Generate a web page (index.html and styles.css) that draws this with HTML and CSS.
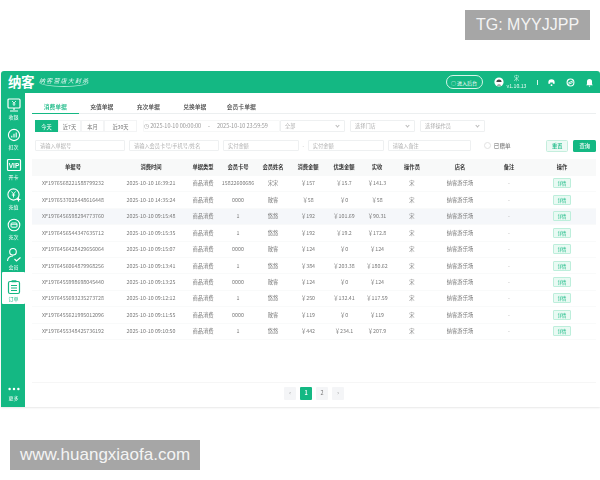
FILE: index.html
```html
<!DOCTYPE html>
<html lang="zh">
<head>
<meta charset="utf-8">
<title>消费单据</title>
<link rel="stylesheet" href="styles.css">
</head>
<body>
<div class="wm wm-top">TG: MYYJJPP</div>
<div class="app">
  <header class="topbar">
    <div class="brand"><span class="logo">纳客</span><span class="slogan">纳客营店大封杀</span></div>
    <div class="top-right">
      <button class="admin">○ 进入后台</button>
      <svg class="avatar" viewBox="0 0 10 10"><circle cx="5" cy="5" r="4.6" fill="#fff"/><path d="M2.4 5a2.6 2.6 0 0 1 5.2 0z" fill="#444"/><path d="M2.6 8.6a3 3 0 0 1 4.8 0z" fill="#555"/></svg>
      <div class="user"><span>宋</span><span>v1.10.13</span></div>
      <span class="sep"></span>
      <svg class="ticon" viewBox="0 0 10 10"><path d="M1.5 5a3.5 3.5 0 1 1 7 0v1.5h-2V5h-3v1.5h-2z" fill="#fff"/><circle cx="5" cy="8" r="1" fill="#fff"/></svg>
      <svg class="ticon" viewBox="0 0 10 10"><circle cx="5" cy="5" r="3.8" fill="none" stroke="#fff" stroke-width="1.2"/><path d="M2.5 5.5 8 3M2.5 7 7.5 5" stroke="#fff" stroke-width="1"/></svg>
      <svg class="ticon" viewBox="0 0 10 10"><path d="M5 1a2.8 2.8 0 0 1 2.8 2.8V7l1 1H1.200l1-1V3.800A2.800 2.800 0 0 1 5 1z" fill="#fff"/><circle cx="5" cy="9" r=".8" fill="#fff"/></svg>
    </div>
  </header>
  <div class="body">
    <nav class="side">
      <a class="nav"><svg viewBox="0 0 16 16"><rect x="2" y="2" width="12" height="9" rx="1" fill="none" stroke="#fff" stroke-width="1.200"/><path d="M8 11v2M4 14h8" stroke="#fff" stroke-width="1.200"/><path d="M6 4 8 6l2-2M8 6v3M6.500 7h3" stroke="#fff" stroke-width=".8" fill="none"/></svg><span>收银</span></a>
      <a class="nav"><svg viewBox="0 0 16 16"><circle cx="8" cy="8" r="5.600" fill="none" stroke="#fff" stroke-width="1.100"/><path d="M5.800 10.500V8.800M8 10.500V6.800M10.200 10.500V5.500" stroke="#fff" stroke-width="1.100"/></svg><span>扣次</span></a>
      <a class="nav"><svg viewBox="0 0 16 16"><rect x="1.500" y="2.500" width="13" height="11" rx="1" fill="none" stroke="#fff" stroke-width="1.200"/><text x="8" y="11" class="vip">VIP</text></svg><span>开卡</span></a>
      <a class="nav"><svg viewBox="0 0 16 16"><circle cx="7.500" cy="7.500" r="5.600" fill="none" stroke="#fff" stroke-width="1.100"/><path d="M5.500 4.500 7.500 7l2-2.500M7.500 7v3.500M5.800 8h3.400" stroke="#fff" stroke-width=".9" fill="none"/><path d="M12.500 10.500v4M10.500 12.500h4" stroke="#fff" stroke-width="1.200"/></svg><span>充值</span></a>
      <a class="nav"><svg viewBox="0 0 16 16"><circle cx="8" cy="8" r="5.800" fill="none" stroke="#fff" stroke-width="1.100"/><rect x="5" y="6" width="6" height="4.200" rx="1" fill="none" stroke="#fff" stroke-width="1"/><path d="M5 7.500h6" stroke="#fff" stroke-width=".7"/></svg><span>充次</span></a>
      <a class="nav"><svg viewBox="0 0 16 16"><circle cx="7" cy="4.800" r="3.300" fill="none" stroke="#fff" stroke-width="1.100"/><path d="M1.500 14c.3-3.500 2.500-5 5.500-5" fill="none" stroke="#fff" stroke-width="1.100"/><path d="m8.500 12 2 2 4-3.500" fill="none" stroke="#fff" stroke-width="1.100"/></svg><span>会员</span></a>
      <a class="nav on"><svg viewBox="0 0 16 16"><rect x="2.500" y="2.500" width="11" height="12" rx="1.500" fill="none" stroke="#14b883" stroke-width="1.200"/><rect x="5.500" y="1.200" width="5" height="2" rx=".5" fill="#14b883"/><path d="M5 6.500h6M5 9h6M5 11.500h6" stroke="#14b883"/></svg><span>订单</span></a>
      <a class="nav more"><svg viewBox="0 0 16 4"><circle cx="3" cy="2" r="1.400" fill="#fff"/><circle cx="8" cy="2" r="1.400" fill="#fff"/><circle cx="13" cy="2" r="1.400" fill="#fff"/></svg><span>更多</span></a>
    </nav>
    <main class="main">
      <div class="tabs">
        <a class="tab on">消费单据</a><a class="tab">充值单据</a><a class="tab">充次单据</a><a class="tab">兑换单据</a><a class="tab">会员卡单据</a>
      </div>
      <div class="filters">
        <div class="seg"><a class="on">今天</a><a>近7天</a><a>本月</a><a>近30天</a></div>
        <div class="field date">◷ 2025-10-10 00:00:00<i>-</i>2025-10-10 23:59:59</div>
        <div class="field sel">全部<b></b></div>
        <div class="field sel">选择门店<b></b></div>
        <div class="field sel">选择操作员<b></b></div>
      </div>
      <div class="filters second">
        <div class="field w90">请输入单据号</div>
        <div class="field w90">请输入会员卡号/手机号/姓名</div>
        <div class="field w76">实付金额</div><i class="dash">-</i>
        <div class="field w76">实付金额</div>
        <div class="field w82">请输入备注</div>
        <label class="check"><span></span>已赠单</label>
        <button class="btn ghost">重置</button>
        <button class="btn solid">查询</button>
      </div>
      <table class="grid">
        <colgroup><col class="c1"><col class="c2"><col class="c3"><col class="c4"><col class="c5"><col class="c6"><col class="c7"><col class="c8"><col class="c9"><col class="c10"><col class="c11"><col class="c12"></colgroup>
        <thead><tr><th>单据号</th><th>消费时间</th><th>单据类型</th><th>会员卡号</th><th>会员姓名</th><th>消费金额</th><th>优惠金额</th><th>实收</th><th>操作员</th><th>店名</th><th>备注</th><th>操作</th></tr></thead>
        <tbody>
          <tr><td>XF1976568221588799232</td><td>2025-10-10 16:39:21</td><td>商品消费</td><td>15822600686</td><td>宋宋</td><td>￥157</td><td>￥15.7</td><td>￥141.3</td><td>宋</td><td>纳客游乐场</td><td>-</td><td><a class="detail">详情</a></td></tr>
          <tr><td>XF1976537028448616448</td><td>2025-10-10 14:35:24</td><td>商品消费</td><td>0000</td><td>散客</td><td>￥58</td><td>￥0</td><td>￥58</td><td>宋</td><td>纳客游乐场</td><td>-</td><td><a class="detail">详情</a></td></tr>
          <tr class="hl"><td>XF1976456598294773760</td><td>2025-10-10 09:15:48</td><td>商品消费</td><td>1</td><td>悠悠</td><td>￥192</td><td>￥101.69</td><td>￥90.31</td><td>宋</td><td>纳客游乐场</td><td>-</td><td><a class="detail">详情</a></td></tr>
          <tr><td>XF1976456544347635712</td><td>2025-10-10 09:15:35</td><td>商品消费</td><td>1</td><td>悠悠</td><td>￥192</td><td>￥19.2</td><td>￥172.8</td><td>宋</td><td>纳客游乐场</td><td>-</td><td><a class="detail">详情</a></td></tr>
          <tr><td>XF1976456428429656064</td><td>2025-10-10 09:15:07</td><td>商品消费</td><td>0000</td><td>散客</td><td>￥124</td><td>￥0</td><td>￥124</td><td>宋</td><td>纳客游乐场</td><td>-</td><td><a class="detail">详情</a></td></tr>
          <tr><td>XF1976456064879968256</td><td>2025-10-10 09:13:41</td><td>商品消费</td><td>1</td><td>悠悠</td><td>￥384</td><td>￥203.38</td><td>￥180.62</td><td>宋</td><td>纳客游乐场</td><td>-</td><td><a class="detail">详情</a></td></tr>
          <tr><td>XF1976455998698045440</td><td>2025-10-10 09:13:25</td><td>商品消费</td><td>0000</td><td>散客</td><td>￥124</td><td>￥0</td><td>￥124</td><td>宋</td><td>纳客游乐场</td><td>-</td><td><a class="detail">详情</a></td></tr>
          <tr><td>XF1976455693235273728</td><td>2025-10-10 09:12:12</td><td>商品消费</td><td>1</td><td>悠悠</td><td>￥250</td><td>￥132.41</td><td>￥117.59</td><td>宋</td><td>纳客游乐场</td><td>-</td><td><a class="detail">详情</a></td></tr>
          <tr><td>XF1976455621995012096</td><td>2025-10-10 09:11:55</td><td>商品消费</td><td>0000</td><td>散客</td><td>￥119</td><td>￥0</td><td>￥119</td><td>宋</td><td>纳客游乐场</td><td>-</td><td><a class="detail">详情</a></td></tr>
          <tr><td>XF1976455348425736192</td><td>2025-10-10 09:10:50</td><td>商品消费</td><td>1</td><td>悠悠</td><td>￥442</td><td>￥234.1</td><td>￥207.9</td><td>宋</td><td>纳客游乐场</td><td>-</td><td><a class="detail">详情</a></td></tr>
        </tbody>
      </table>
      <div class="pager"><a class="pg">‹</a><a class="pg on">1</a><a class="pg">2</a><a class="pg">›</a></div>
    </main>
  </div>
</div>
<div class="wm wm-bottom">www.huangxiaofa.com</div>
</body>
</html>
```
FILE: styles.css
```css
* { box-sizing: border-box; }
html, body { margin: 0; height: 480px; background: #fff; overflow: hidden; }
body { position: relative; padding-top: 71px; font-family: "Noto Sans CJK SC", "Noto Sans", sans-serif; color: #666; }
a { display: block; }
.wm { position: absolute; background: #a6a6a6; color: #f4f4f4; font-family: "Liberation Sans", Arial, sans-serif; display: flex; align-items: center; justify-content: center; }
.wm-top { left: 465px; top: 10px; width: 125px; height: 30px; font-size: 16px; }
.wm-bottom { left: 10px; top: 440px; width: 190px; height: 30px; font-size: 17px; }

.app { margin-left: 1px; width: 599px; height: 336px; display: flex; flex-direction: column; filter: blur(.35px); border-radius: 3px 3px 0 0; overflow: hidden; box-shadow: 0 1px 2px #e8e8e8; }
.topbar { height: 22px; background: #14b883; color: #fff; display: flex; align-items: center; justify-content: space-between; padding: 0 6px 0 7px; flex: none; }
.brand { display: flex; align-items: center; gap: 5px; }
.logo { font-size: 13.5px; font-weight: 700; letter-spacing: -.5px; line-height: 1; }
.slogan { font-style: italic; font-size: 6px; line-height: 8px; letter-spacing: 1.200px; opacity: .9; border-bottom: .4px solid #bdeedd; border-radius: 50%; padding-bottom: 1px; }
.top-right { display: flex; align-items: center; }
.admin { width: 37px; height: 14px; border: .7px solid #d5f5e8; border-radius: 7px; background: transparent; color: #fff; font: 5px "Noto Sans CJK SC", sans-serif; padding: 0; white-space: nowrap; }
.avatar { width: 10px; height: 10px; margin-left: 11px; }
.user { width: 24px; margin-left: 1px; display: flex; flex-direction: column; align-items: center; font-size: 5.200px; line-height: 8px; color: #e9fbf4; }
.sep { width: 1px; height: 5px; background: #d9f6ea; margin: 0 9.500px 0 8px; }
.ticon { width: 9px; height: 9px; margin-right: 10px; }
.ticon:last-child { margin-right: 0; }

.body { flex: 1; display: flex; min-height: 0; background: #fff; }
.side { width: 24px; padding-left: 1px; background: #14b883; display: flex; flex-direction: column; padding-top: 3px; flex: none; }
.nav { height: 30px; display: flex; flex-direction: column; align-items: center; padding-top: 1px; color: #fff; font-size: 5px; line-height: 7px; }
.nav svg { width: 16px; height: 16px; flex: none; }
.vip { font: 700 6.500px "Liberation Sans", sans-serif; fill: #fff; text-anchor: middle; }
.nav.on { background: #fff; color: #14b883; height: 32px; padding-top: 7px; margin-top: -4px; border-radius: 1px; }
.nav.more { margin-top: auto; height: auto; padding: 0 0 6px; }
.nav.more svg { width: 14px; height: 4px; margin-bottom: 3px; }

.main { flex: 1; min-width: 0; padding: 3px 4px 0 7px; display: flex; flex-direction: column; }
.tabs { display: flex; height: 18px; border-bottom: .6px solid #eceff0; flex: none; }
.tab { width: 46.500px; text-align: center; font-size: 5.800px; line-height: 21px; height: 18px; color: #444; font-weight: 500; }
.tab.on { color: #14b883; border-bottom: 1px solid #14b883; }
.filters { display: flex; align-items: center; height: 12px; margin-top: 6px; padding-left: 3px; flex: none; }
.filters.second { margin-top: 7.500px; }
.seg { display: flex; width: 103px; height: 12px; font-size: 5.200px; line-height: 11.500px; text-align: center; flex: none; }
.seg a { width: 23px; border: .5px solid #f3f4f5; color: #777; }
.seg a.on { background: #14b883; color: #fff; border-color: #14b883; }
.seg a:last-child { width: 33px; }
.field { border: .6px solid #eef0f1; height: 11.500px; border-radius: 1px; font-size: 5.200px; line-height: 10.500px; color: #b0b0b0; padding-left: 4px; position: relative; flex: none; white-space: nowrap; }
.date { width: 137px; margin-left: 5px; border-color: #f6f7f7; color: #999; padding-left: 0; font-size: 5.500px; }
.date i { font-style: normal; margin: 0 7px; }
.sel { width: 65px; margin-right: 5px; }
.sel b { position: absolute; right: 5px; top: 3px; width: 3px; height: 3px; border-right: .6px solid #bbb; border-bottom: .6px solid #bbb; transform: rotate(45deg); }
.w90 { width: 90px; margin-right: 4px; }
.w76 { width: 76px; }
.w82 { width: 83px; margin-left: 4px; }
.dash { font-style: normal; font-size: 5px; width: 9px; text-align: center; color: #aaa; }
.check { display: flex; align-items: center; font-size: 5.600px; color: #666; margin-left: 13px; gap: 3px; width: 62px; flex: none; }
.check span { width: 7px; height: 7px; border: .5px solid #e2e2e2; border-radius: 50%; }
.btn { width: 23px; height: 12px; border-radius: 1.500px; font: 500 5.200px "Noto Sans CJK SC", sans-serif; padding: 0; }
.ghost { background: #eefaf5; color: #14b883; border: .5px solid #c4eedd; margin-right: 5px; }
.solid { background: #14b883; color: #fff; border: 0; }

.grid { width: 564px; table-layout: fixed; border-collapse: collapse; margin-top: 7px; flex: none; font-size: 5.300px; text-align: center; }
.c1 { width: 82px; } .c2 { width: 74px; } .c3 { width: 30px; } .c4 { width: 40px; } .c5 { width: 30px; } .c6 { width: 40px; }
.c7 { width: 32px; } .c8 { width: 34px; } .c9 { width: 36px; } .c10 { width: 60px; } .c11 { width: 38px; } .c12 { width: 68px; }
.grid th { height: 17px; background: #f8f9f9; color: #333; font-weight: 600; padding: 0; }
.grid td { height: 16.400px; padding: 0; border-bottom: .4px solid #f9fafa; color: #7a7a7a; white-space: nowrap; overflow: hidden; }
.hl td { background: #f5f7fa; }
.detail { width: 18px; height: 10px; margin: 0 auto; background: #e9faf3; border: .6px solid #bdeedb; border-radius: 1px; color: #14b883; font-size: 4.300px; line-height: 8.800px; }
.pager { margin-top: auto; margin-bottom: 7.500px; padding-top: 3.500px; display: flex; justify-content: center; gap: 3.500px; border-top: .5px solid #f6f6f6; width: 564px; }
.pg { width: 12.500px; height: 13px; background: #f4f5f7; border-radius: 1px; text-align: center; font-size: 5.500px; line-height: 13px; color: #777; }
.pg.on { background: #14b883; color: #fff; font-weight: 700; }
```
